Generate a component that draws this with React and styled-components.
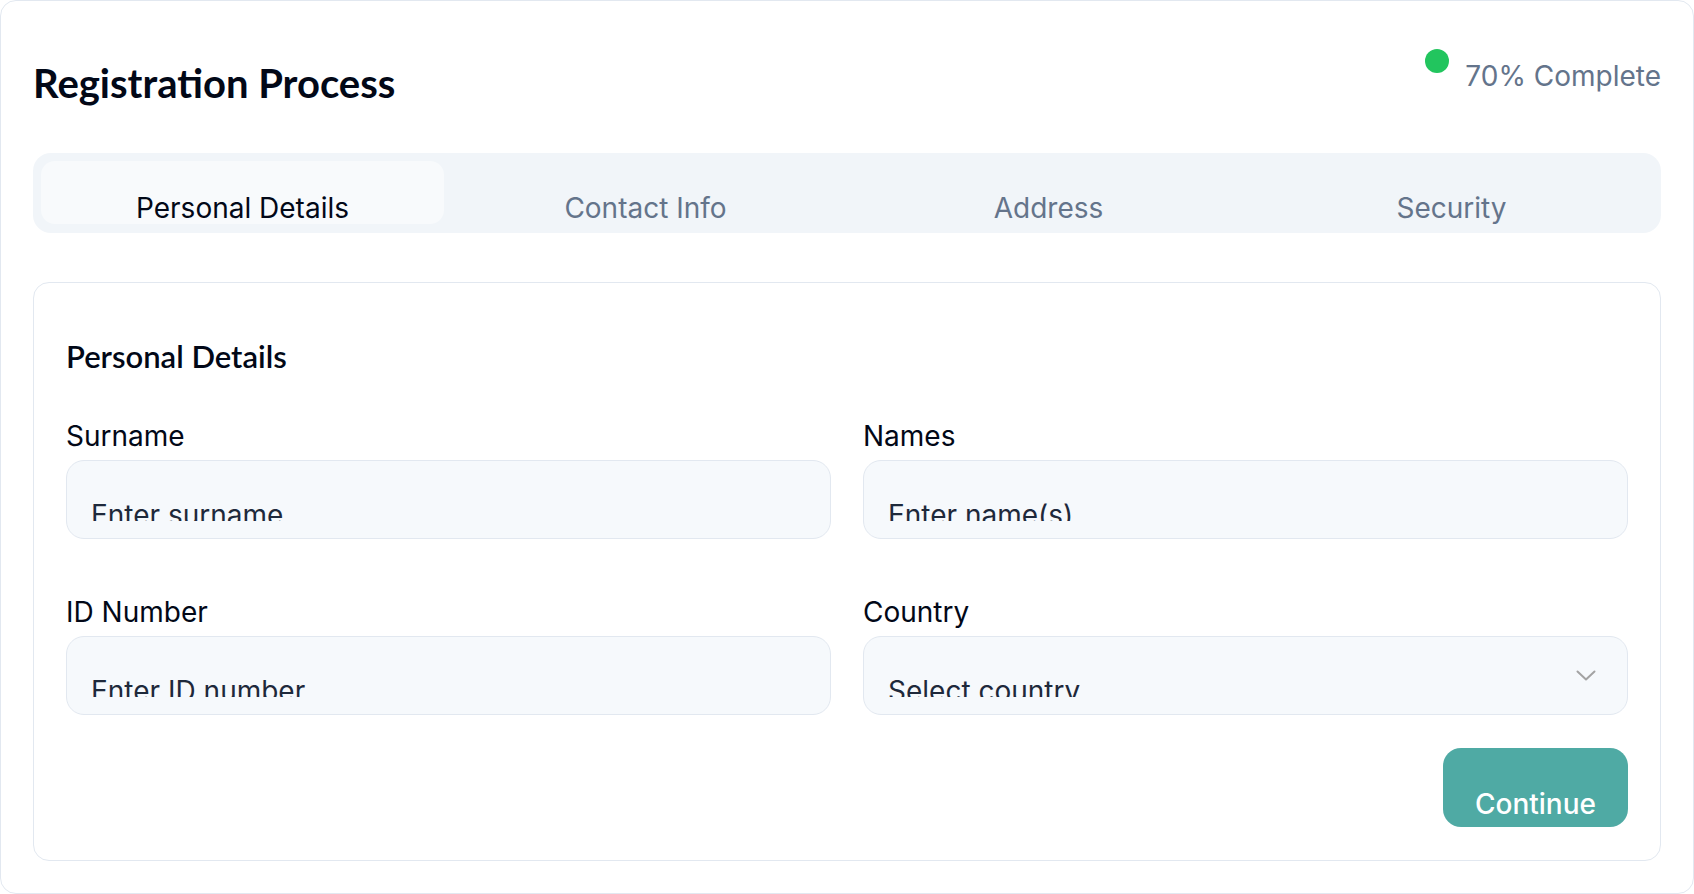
import React from 'react';
import styled, { createGlobalStyle } from 'styled-components';

const GlobalStyle = createGlobalStyle`
  html, body {
    margin: 0;
    padding: 0;
    background: #ffffff;
  }
  body {
    font-family: Inter, 'Liberation Sans', sans-serif;
    color: #020817;
  }
  * {
    box-sizing: border-box;
  }
`;

const tabs = ['Personal Details', 'Contact Info', 'Address', 'Security'];

const fields = [
  { label: 'Surname', placeholder: 'Enter surname' },
  { label: 'Names', placeholder: 'Enter name(s)' },
  { label: 'ID Number', placeholder: 'Enter ID number' },
  { label: 'Country', placeholder: 'Select country', select: true },
];

const Chevron = () => (
  <svg width='20' height='11' viewBox='0 0 20 11' fill='none'>
    <polyline
      points='1.5,1.5 10,9.5 18.5,1.5'
      stroke='#a3a3a3'
      strokeWidth='2'
      strokeLinecap='round'
      strokeLinejoin='round'
    />
  </svg>
);

const App = () => {
  return (
    <>
      <GlobalStyle />
      <Wrapper>
        <Header>
          <Title>Registration Process</Title>
          <Progress>
            <Dot />
            <ProgressText>70% Complete</ProgressText>
          </Progress>
        </Header>

        <TabList>
          {tabs.map((tab, i) => (
            <Tab key={tab} active={i === 0}>
              {tab}
            </Tab>
          ))}
        </TabList>

        <Card>
          <CardTitle>Personal Details</CardTitle>
          <FormGrid>
            {fields.map((f) => (
              <FieldGroup key={f.label}>
                <Label>{f.label}</Label>
                <Field>
                  <Placeholder>{f.placeholder}</Placeholder>
                  {f.select && (
                    <ChevronBox>
                      <Chevron />
                    </ChevronBox>
                  )}
                </Field>
              </FieldGroup>
            ))}
          </FormGrid>
          <Actions>
            <Button>Continue</Button>
          </Actions>
        </Card>
      </Wrapper>
    </>
  );
};

const Wrapper = styled.div`
  min-height: 100vh;
  border: 1px solid #e2e8f0;
  border-radius: 16px;
  padding: 32px;
  background: #ffffff;
`;

const Header = styled.div`
  display: flex;
  justify-content: space-between;
  align-items: flex-start;
  padding-top: 16px;
`;

const Title = styled.h1`
  margin: 10px 0 0;
  font-family: Lato, 'Liberation Sans', sans-serif;
  font-weight: 700;
  font-size: 40px;
  line-height: 48px;
  color: #020817;
`;

const Progress = styled.div`
  display: flex;
  align-items: flex-start;
  gap: 16px;
`;

const Dot = styled.span`
  width: 24px;
  height: 24px;
  border-radius: 50%;
  background: #22c55e;
`;

const ProgressText = styled.span`
  margin-top: 10px;
  font-size: 28px;
  line-height: 34px;
  color: #64748b;
`;

const TabList = styled.div`
  margin-top: 46px;
  display: grid;
  grid-template-columns: repeat(4, 1fr);
  padding: 8px 8px 9px;
  background: #f1f5f9;
  border-radius: 18px;
`;

const Tab = styled.div`
  height: 63px;
  padding-top: 30px;
  text-align: center;
  font-size: 28px;
  line-height: 34px;
  border-radius: 14px;
  color: ${(p) => (p.active ? '#020817' : '#64748b')};
  background: ${(p) => (p.active ? '#f8fafc' : 'transparent')};
`;

const Card = styled.div`
  margin-top: 49px;
  border: 1px solid #e2e8f0;
  border-radius: 16px;
  padding: 55px 32px 33px;
`;

const CardTitle = styled.h2`
  margin: 0;
  font-family: Lato, 'Liberation Sans', sans-serif;
  font-weight: 600;
  font-size: 31px;
  line-height: 36px;
  color: #020817;
`;

const FormGrid = styled.div`
  margin-top: 45px;
  display: grid;
  grid-template-columns: 1fr 1fr;
  column-gap: 32px;
  row-gap: 56px;
`;

const FieldGroup = styled.div`
  display: flex;
  flex-direction: column;
`;

const Label = styled.label`
  margin-bottom: 7px;
  font-size: 28px;
  font-weight: 400;
  line-height: 34px;
  color: #020817;
`;

const Field = styled.div`
  height: 79px;
  display: grid;
  grid-template-columns: 1fr auto;
  padding: 0 24px;
  border: 1px solid #e2e8f0;
  border-radius: 18px;
  background: #f6f9fc;
  overflow: hidden;
`;

const Placeholder = styled.span`
  align-self: start;
  display: block;
  margin-top: 37px;
  height: 23px;
  overflow: hidden;
  font-size: 28px;
  line-height: 34px;
  color: #1e293b;
  white-space: nowrap;
`;

const ChevronBox = styled.span`
  align-self: center;
  display: flex;
  margin-right: 7px;
`;

const Actions = styled.div`
  margin-top: 33px;
  display: flex;
  justify-content: flex-end;
`;

const Button = styled.button`
  height: 79px;
  padding: 33px 32px 0;
  border: none;
  border-radius: 18px;
  background: #4faaa4;
  color: #ffffff;
  font-family: Inter, 'Liberation Sans', sans-serif;
  font-size: 28px;
  font-weight: 500;
  line-height: 34px;
  text-align: left;
  cursor: pointer;
`;

export default App;
